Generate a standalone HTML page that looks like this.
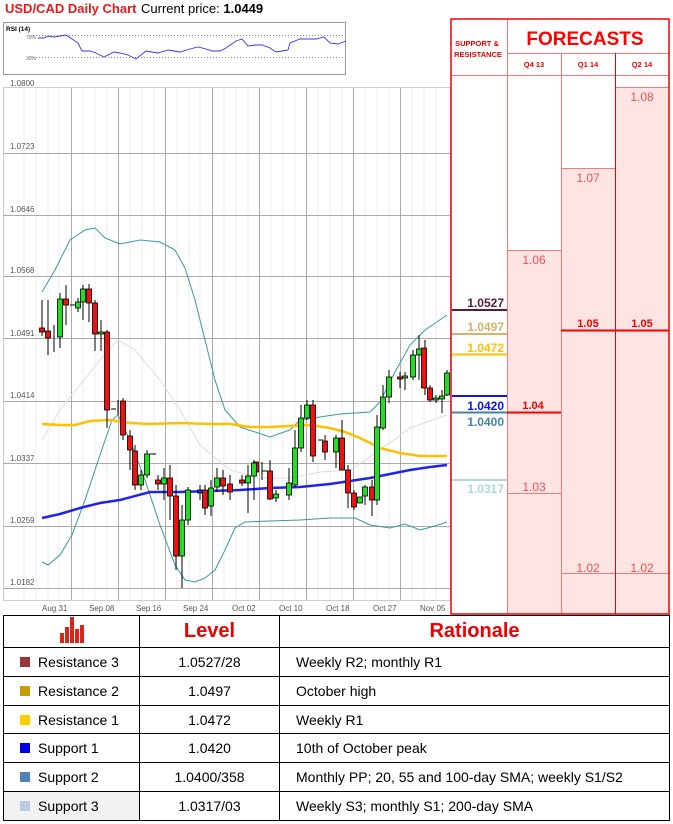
<!DOCTYPE html><html><head><meta charset="utf-8"><style>
body{margin:0;width:673px;height:824px;background:#fff;position:relative;overflow:hidden;font-family:"Liberation Sans",sans-serif}
.a{position:absolute}
td{border:1px solid #000;font-family:"Liberation Sans",sans-serif;font-size:14px;padding:0}
</style></head><body>
<svg class="a" style="left:0;top:0" width="673" height="824" font-family="Liberation Sans, sans-serif">
<text x="5" y="13" font-size="13" font-weight="bold" fill="#e31b1b">USD/CAD Daily Chart</text>
<text x="141" y="13" font-size="13" fill="#000">Current price: <tspan font-weight="bold">1.0449</tspan></text>
<!-- RSI -->
<rect x="3.5" y="22.5" width="342" height="52" fill="#fff" stroke="#999"/>
<text x="6" y="31" font-size="6.5" font-weight="bold">RSI (14)</text>
<text x="26" y="39" font-size="5" fill="#666">70%</text><text x="26" y="60" font-size="5" fill="#666">30%</text>
<line x1="33" y1="35.5" x2="344" y2="35.5" stroke="#888" stroke-dasharray="1,2"/>
<line x1="33" y1="57.5" x2="344" y2="57.5" stroke="#888" stroke-dasharray="1,2"/>
<polyline fill="none" stroke="#3333ff" stroke-width="0.9" points="38,38 44,38 48,36 54,37 60,36 66,35 72,39 78,43 82,51 90,51 96,53 104,57 114,52 120,53 128,55 136,59 146,51 158,53 168,50 180,52 190,49 198,47 206,49 212,51 220,51 226,48 236,41 242,39 248,46 256,45 262,45 270,48 276,52 282,51 288,50 290,43 300,39 310,39 316,39 324,37 330,43 338,44 346,41"/>
<!-- chart grid -->
<rect x="3.5" y="87.5" width="447" height="513" fill="#fff" stroke="#ccc"/>
<g stroke="#eee" stroke-width="1">
<line x1="24" y1="88" x2="24" y2="600"/><line x1="36" y1="88" x2="36" y2="600"/><line x1="48" y1="88" x2="48" y2="600"/><line x1="59" y1="88" x2="59" y2="600"/><line x1="83" y1="88" x2="83" y2="600"/><line x1="95" y1="88" x2="95" y2="600"/><line x1="107" y1="88" x2="107" y2="600"/><line x1="130" y1="88" x2="130" y2="600"/><line x1="142" y1="88" x2="142" y2="600"/><line x1="154" y1="88" x2="154" y2="600"/><line x1="177" y1="88" x2="177" y2="600"/><line x1="189" y1="88" x2="189" y2="600"/><line x1="200" y1="88" x2="200" y2="600"/><line x1="224" y1="88" x2="224" y2="600"/><line x1="236" y1="88" x2="236" y2="600"/><line x1="248" y1="88" x2="248" y2="600"/><line x1="271" y1="88" x2="271" y2="600"/><line x1="283" y1="88" x2="283" y2="600"/><line x1="295" y1="88" x2="295" y2="600"/><line x1="318" y1="88" x2="318" y2="600"/><line x1="330" y1="88" x2="330" y2="600"/><line x1="342" y1="88" x2="342" y2="600"/><line x1="365" y1="88" x2="365" y2="600"/><line x1="377" y1="88" x2="377" y2="600"/><line x1="389" y1="88" x2="389" y2="600"/><line x1="412" y1="88" x2="412" y2="600"/><line x1="424" y1="88" x2="424" y2="600"/><line x1="436" y1="88" x2="436" y2="600"/>
</g>
<g stroke="#aaa" stroke-width="1">
<line x1="71.5" y1="88" x2="71.5" y2="600"/><line x1="118.5" y1="88" x2="118.5" y2="600"/><line x1="165.5" y1="88" x2="165.5" y2="600"/><line x1="212.5" y1="88" x2="212.5" y2="600"/><line x1="259.5" y1="88" x2="259.5" y2="600"/><line x1="306.5" y1="88" x2="306.5" y2="600"/><line x1="353.5" y1="88" x2="353.5" y2="600"/><line x1="400.5" y1="88" x2="400.5" y2="600"/>
<line x1="3" y1="153.5" x2="450" y2="153.5"/><line x1="3" y1="215.5" x2="450" y2="215.5"/><line x1="3" y1="276.5" x2="450" y2="276.5"/><line x1="3" y1="338.5" x2="450" y2="338.5"/><line x1="3" y1="401.5" x2="450" y2="401.5"/><line x1="3" y1="463.5" x2="450" y2="463.5"/><line x1="3" y1="526.5" x2="450" y2="526.5"/><line x1="3" y1="588.5" x2="450" y2="588.5"/>
</g>
<g font-size="8" fill="#555">
<text x="10" y="86">1.0800</text><text x="10" y="149">1.0723</text><text x="10" y="212">1.0646</text><text x="10" y="273">1.0568</text><text x="10" y="336">1.0491</text><text x="10" y="398">1.0414</text><text x="10" y="461">1.0337</text><text x="10" y="523">1.0259</text><text x="10" y="585">1.0182</text>
<text x="42" y="611">Aug 31</text><text x="89" y="611">Sep 08</text><text x="136" y="611">Sep 16</text><text x="183" y="611">Sep 24</text><text x="232" y="611">Oct 02</text><text x="279" y="611">Oct 10</text><text x="326" y="611">Oct 18</text><text x="373" y="611">Oct 27</text><text x="420" y="611">Nov 05</text>
</g>
<!-- indicators -->
<polyline fill="none" stroke="#ddd" stroke-width="1" points="42,440 60,410 80,385 100,360 118,340 135,350 160,380 180,410 200,445 230,470 260,478 290,478 320,472 350,470 380,450 410,428 447,415"/>
<polyline fill="none" stroke="#3a9a9a" stroke-width="1" points="42,292 55,270 70,240 85,230 95,228 105,238 120,244 140,240 160,242 175,250 185,268 195,300 205,340 215,380 225,410 240,427 255,432 270,437 290,430 300,420 320,417 340,414 370,412 380,402 395,372 410,345 425,330 447,315"/>
<polyline fill="none" stroke="#3a9a9a" stroke-width="1" points="42,562 48,565 60,555 72,535 85,500 100,455 112,420 118,415 130,440 145,480 160,525 175,565 185,580 195,582 205,578 215,570 225,550 235,528 245,522 270,521 300,520 330,518 355,518 370,525 390,528 405,524 420,530 435,526 447,522"/>
<polyline fill="none" stroke="#ffc000" stroke-width="2.5" points="42,424 60,425 75,425 90,421 110,420 130,423 150,424 180,423 210,424 230,424 250,427 270,427 290,426 310,425 330,428 345,432 360,438 380,448 400,453 420,456 447,456"/>
<polyline fill="none" stroke="#2222ee" stroke-width="2.5" points="42,518 60,514 80,508 100,503 120,500 150,492 180,492 210,491 240,490 270,488 300,487 330,484 350,481 370,478 390,474 410,470 430,467 447,465"/>
<!-- candles -->
<g stroke="#000" stroke-width="1">
<line x1="42" y1="300" x2="42" y2="336"/><line x1="48" y1="300" x2="48" y2="355"/><line x1="54" y1="325" x2="54" y2="352"/><line x1="60" y1="293" x2="60" y2="348"/><line x1="66" y1="285" x2="66" y2="325"/><line x1="78" y1="298" x2="78" y2="312"/><line x1="83" y1="285" x2="83" y2="320"/><line x1="89" y1="284" x2="89" y2="322"/><line x1="95" y1="300" x2="95" y2="351"/><line x1="101" y1="320" x2="101" y2="351"/><line x1="107" y1="330" x2="107" y2="428"/><line x1="118" y1="400" x2="118" y2="415"/><line x1="123" y1="398" x2="123" y2="440"/><line x1="130" y1="430" x2="130" y2="470"/><line x1="135" y1="445" x2="135" y2="490"/><line x1="141" y1="470" x2="141" y2="490"/><line x1="147" y1="450" x2="147" y2="478"/><line x1="158" y1="475" x2="158" y2="490"/><line x1="164" y1="468" x2="164" y2="500"/><line x1="170" y1="465" x2="170" y2="520"/><line x1="176" y1="485" x2="176" y2="570"/><line x1="182" y1="505" x2="182" y2="588"/><line x1="188" y1="487" x2="188" y2="525"/><line x1="200" y1="485" x2="200" y2="500"/><line x1="205" y1="485" x2="205" y2="515"/><line x1="211" y1="480" x2="211" y2="516"/><line x1="217" y1="468" x2="217" y2="492"/><line x1="223" y1="470" x2="223" y2="495"/><line x1="230" y1="475" x2="230" y2="500"/><line x1="242" y1="475" x2="242" y2="486"/><line x1="248" y1="465" x2="248" y2="513"/><line x1="254" y1="460" x2="254" y2="500"/><line x1="262" y1="462" x2="262" y2="480"/><line x1="270" y1="460" x2="270" y2="500"/><line x1="276" y1="490" x2="276" y2="502"/><line x1="289" y1="468" x2="289" y2="500"/><line x1="295" y1="430" x2="295" y2="487"/><line x1="301" y1="405" x2="301" y2="452"/><line x1="307" y1="400" x2="307" y2="420"/><line x1="313" y1="400" x2="313" y2="462"/><line x1="325" y1="435" x2="325" y2="460"/><line x1="336" y1="435" x2="336" y2="468"/><line x1="342" y1="420" x2="342" y2="470"/><line x1="348" y1="465" x2="348" y2="508"/><line x1="354" y1="490" x2="354" y2="510"/><line x1="365" y1="485" x2="365" y2="505"/><line x1="372" y1="480" x2="372" y2="516"/><line x1="377" y1="415" x2="377" y2="505"/><line x1="383" y1="385" x2="383" y2="430"/><line x1="389" y1="370" x2="389" y2="403"/><line x1="400" y1="372" x2="400" y2="388"/><line x1="405" y1="372" x2="405" y2="390"/><line x1="413" y1="350" x2="413" y2="380"/><line x1="419" y1="335" x2="419" y2="380"/><line x1="425" y1="340" x2="425" y2="395"/><line x1="430" y1="385" x2="430" y2="402"/><line x1="436" y1="395" x2="436" y2="403"/><line x1="442" y1="390" x2="442" y2="413"/><line x1="447" y1="370" x2="447" y2="396"/>
</g>
<g stroke="#000" stroke-width="0.8">
<g fill="#ee1111">
<rect x="39.5" y="328" width="5" height="4"/><rect x="45.5" y="331" width="5" height="7"/><rect x="63.5" y="299" width="5" height="6"/><rect x="86.5" y="289" width="5" height="14"/><rect x="92.5" y="303" width="5" height="31"/><rect x="104.5" y="332" width="5" height="78"/><rect x="120.5" y="401" width="5" height="34"/><rect x="127.5" y="436" width="5" height="14"/><rect x="132.5" y="451" width="5" height="34"/><rect x="155.5" y="480" width="5" height="4"/><rect x="167.5" y="478" width="5" height="18"/><rect x="173.5" y="496" width="5" height="60"/><rect x="202.5" y="490" width="5" height="18"/><rect x="220.5" y="478" width="5" height="8"/><rect x="227.5" y="484" width="5" height="8"/><rect x="239.5" y="480" width="5" height="3"/><rect x="253.5" y="462" width="5" height="10"/><rect x="267.5" y="471" width="5" height="28"/><rect x="310.5" y="405" width="5" height="51"/><rect x="322.5" y="441" width="5" height="11"/><rect x="339.5" y="438" width="5" height="32"/><rect x="345.5" y="470" width="5" height="23"/><rect x="351.5" y="493" width="5" height="14"/><rect x="369.5" y="487" width="5" height="13"/><rect x="397.5" y="377" width="5" height="2"/><rect x="421.5" y="348" width="5" height="40"/><rect x="427.5" y="388" width="5" height="12"/>
</g>
<g fill="#22dd22">
<rect x="57.5" y="299" width="5" height="38"/><rect x="75.5" y="302" width="5" height="6"/><rect x="80.5" y="289" width="5" height="13"/><rect x="98.5" y="332" width="5" height="2"/><rect x="138.5" y="475" width="5" height="10"/><rect x="144.5" y="454" width="5" height="21"/><rect x="161.5" y="478" width="5" height="6"/><rect x="179.5" y="520" width="5" height="36"/><rect x="185.5" y="490" width="5" height="30"/><rect x="208.5" y="488" width="5" height="18"/><rect x="214.5" y="478" width="5" height="9"/><rect x="245.5" y="476" width="5" height="7"/><rect x="251.5" y="463" width="5" height="13"/><rect x="273.5" y="494" width="5" height="4"/><rect x="286.5" y="483" width="5" height="12"/><rect x="292.5" y="448" width="5" height="37"/><rect x="298.5" y="418" width="5" height="30"/><rect x="304.5" y="405" width="5" height="13"/><rect x="333.5" y="438" width="5" height="14"/><rect x="357.5" y="497" width="5" height="6"/><rect x="362.5" y="487" width="5" height="9"/><rect x="374.5" y="427" width="5" height="73"/><rect x="380.5" y="397" width="5" height="31"/><rect x="386.5" y="377" width="5" height="20"/><rect x="402.5" y="376" width="5" height="2"/><rect x="410.5" y="355" width="5" height="22"/><rect x="416.5" y="349" width="5" height="6"/><rect x="433.5" y="398" width="5" height="2"/><rect x="439.5" y="396" width="5" height="3"/><rect x="444.5" y="373" width="5" height="22"/>
</g>
<g fill="#2222ee"><rect x="197.5" y="490" width="5" height="3"/></g>
</g>
<g stroke="#000"><line x1="70" y1="305" x2="76" y2="305"/><line x1="111" y1="409" x2="116" y2="409"/><line x1="150" y1="454" x2="156" y2="454"/><line x1="262" y1="471" x2="267" y2="471"/><line x1="318" y1="440" x2="323" y2="440"/></g>
<!-- forecast panel -->
<rect x="507" y="250" width="54" height="364" fill="#ffe4e4"/>
<rect x="561" y="168" width="54" height="446" fill="#ffe4e4"/>
<rect x="615" y="87" width="54" height="527" fill="#ffe4e4"/>
<g stroke="#f47a7a" stroke-width="1">
<line x1="507.5" y1="19" x2="507.5" y2="614"/><line x1="451" y1="75.5" x2="669" y2="75.5"/><line x1="507" y1="53.5" x2="669" y2="53.5"/>
<line x1="561.5" y1="53" x2="561.5" y2="614"/><line x1="507" y1="250.5" x2="561" y2="250.5"/><line x1="507" y1="493.5" x2="561" y2="493.5"/>
<line x1="561" y1="168.5" x2="615" y2="168.5"/><line x1="561" y1="573.5" x2="669" y2="573.5"/><line x1="615" y1="87.5" x2="669" y2="87.5"/>
</g>
<line x1="615.5" y1="53" x2="615.5" y2="614" stroke="#e00" stroke-width="1"/>
<rect x="451" y="19" width="218" height="595" fill="none" stroke="#e00" stroke-width="1.5"/>
<line x1="561" y1="330.5" x2="669" y2="330.5" stroke="#f00" stroke-width="2"/>
<line x1="507" y1="412.5" x2="561" y2="412.5" stroke="#f00" stroke-width="2"/>
<text x="477" y="46" font-size="7.5" font-weight="bold" fill="#e00" text-anchor="middle">SUPPORT &amp;</text>
<text x="478" y="57" font-size="7.5" font-weight="bold" fill="#e00" text-anchor="middle">RESISTANCE</text>
<text x="585" y="45" font-size="19" font-weight="bold" fill="#f00" text-anchor="middle">FORECASTS</text>
<g font-size="7.5" font-weight="bold" fill="#e00" text-anchor="middle"><text x="534" y="67">Q4 13</text><text x="588" y="67">Q1 14</text><text x="642" y="67">Q2 14</text></g>
<g font-size="12" fill="#f05050" text-anchor="middle"><text x="642" y="101">1.08</text><text x="588" y="182">1.07</text><text x="534" y="264">1.06</text><text x="534" y="491">1.03</text><text x="588" y="572">1.02</text><text x="642" y="572">1.02</text></g>
<g font-size="11" font-weight="bold" fill="#e00" text-anchor="middle"><text x="588" y="327">1.05</text><text x="642" y="327">1.05</text><text x="533" y="409">1.04</text></g>
<g font-size="12" font-weight="bold" text-anchor="end">
<line x1="452" y1="310" x2="507" y2="310" stroke="#5a1a38" stroke-width="2"/><text x="504" y="307" fill="#5a1a38">1.0527</text>
<line x1="452" y1="334" x2="507" y2="334" stroke="#d9b36a" stroke-width="2"/><text x="504" y="331" fill="#d9b36a">1.0497</text>
<line x1="452" y1="354.5" x2="507" y2="354.5" stroke="#ffc000" stroke-width="2"/><text x="504" y="352" fill="#ffc000">1.0472</text>
<line x1="452" y1="396" x2="507" y2="396" stroke="#1010ee" stroke-width="2"/><text x="504" y="410" fill="#1010ee">1.0420</text>
<line x1="452" y1="412.5" x2="507" y2="412.5" stroke="#4682a9" stroke-width="2"/><text x="504" y="426" fill="#4682a9">1.0400</text>
<line x1="452" y1="480" x2="507" y2="480" stroke="#b0d8d8" stroke-width="2"/><text x="504" y="493" fill="#b0d8d8">1.0317</text>
</g>
</svg>
<table class="a" style="left:3px;top:615px;width:667px;height:206px;border-collapse:collapse" cellspacing="0">
<tr style="height:32px"><td style="width:135px;text-align:center;background:#fff"><svg width="26" height="26" viewBox="0 0 26 26"><g fill="#d9261c"><rect x="1" y="16" width="4" height="10"/><rect x="6" y="10" width="4" height="16"/><rect x="11" y="0" width="4" height="26"/><rect x="16" y="12" width="4" height="14"/><rect x="21" y="8" width="4" height="18"/></g></svg></td><td style="width:139px;text-align:center;color:#e00;font-weight:bold;font-size:20px">Level</td><td style="text-align:center;color:#e00;font-weight:bold;font-size:20px">Rationale</td></tr>
<tr><td style="padding-left:16px"><span style="display:inline-block;width:10px;height:10px;background:#953735;margin-right:8px"></span>Resistance 3</td><td style="text-align:center">1.0527/28</td><td style="padding-left:16px">Weekly R2; monthly R1</td></tr>
<tr><td style="padding-left:16px"><span style="display:inline-block;width:10px;height:10px;background:#c89b0a;margin-right:8px"></span>Resistance 2</td><td style="text-align:center">1.0497</td><td style="padding-left:16px">October high</td></tr>
<tr><td style="padding-left:16px"><span style="display:inline-block;width:10px;height:10px;background:#ffcc00;margin-right:8px"></span>Resistance 1</td><td style="text-align:center">1.0472</td><td style="padding-left:16px">Weekly R1</td></tr>
<tr><td style="padding-left:16px"><span style="display:inline-block;width:10px;height:10px;background:#0000ee;margin-right:8px"></span>Support 1</td><td style="text-align:center">1.0420</td><td style="padding-left:16px">10th of October peak</td></tr>
<tr><td style="padding-left:16px"><span style="display:inline-block;width:10px;height:10px;background:#4f81bd;margin-right:8px"></span>Support 2</td><td style="text-align:center">1.0400/358</td><td style="padding-left:16px">Monthly PP; 20, 55 and 100-day SMA; weekly S1/S2</td></tr>
<tr><td style="padding-left:16px;background:#f2f2f2"><span style="display:inline-block;width:10px;height:10px;background:#b8cce4;margin-right:8px"></span>Support 3</td><td style="text-align:center">1.0317/03</td><td style="padding-left:16px">Weekly S3; monthly S1; 200-day SMA</td></tr>
</table>
</body></html>
